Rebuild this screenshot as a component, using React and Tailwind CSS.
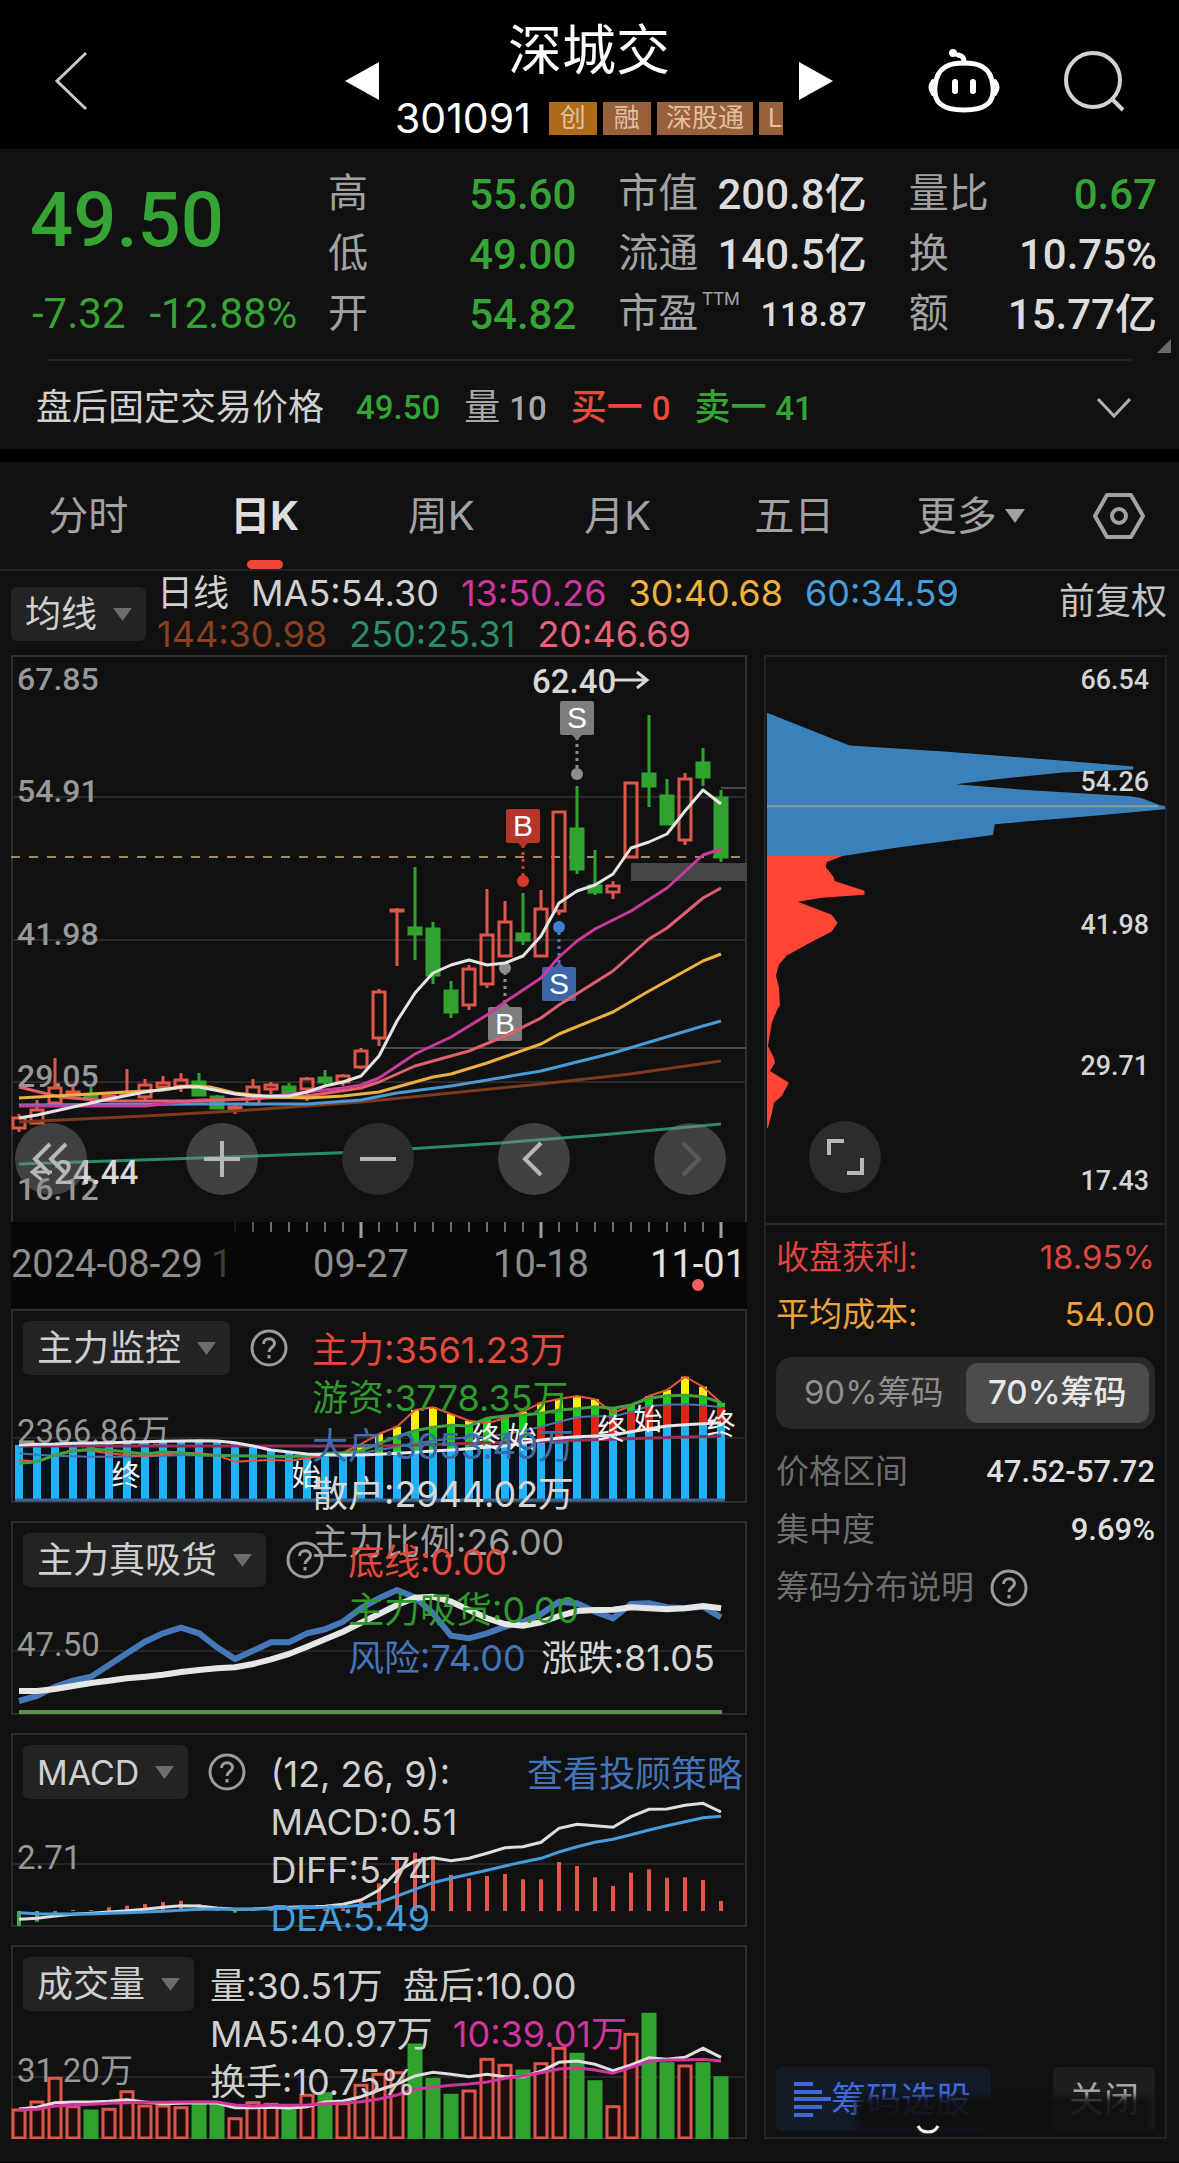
import React, { useState } from "react";

const STEP = 18;
const FIRST_X = 19;
const xAt = (i) => FIRST_X + i * STEP;
const series = (ys) => ys.map((y, i) => `${xAt(i)},${y}`).join(" ");
const fromTop = (base, ys) => ys.map((y) => Math.round((base + y / 3) * 10) / 10);

/* colour, high, body top, body bottom, low */
const CANDLES = [
  ["r", 1114, 1117, 1129, 1132], ["r", 1100, 1109, 1124, 1124], ["r", 1058, 1087, 1104, 1104],
  ["r", 1086, 1091, 1096, 1096], ["g", 1086, 1094, 1100, 1102], ["r", 1094, 1095, 1100, 1101],
  ["r", 1069, 1092, 1095, 1095], ["r", 1079, 1084, 1098, 1100], ["r", 1076, 1082, 1088, 1088],
  ["r", 1073, 1079, 1087, 1092], ["g", 1073, 1081, 1096, 1096], ["g", 1095, 1096, 1109, 1109],
  ["r", 1104, 1106, 1111, 1114], ["r", 1079, 1086, 1105, 1105], ["r", 1082, 1084, 1090, 1094],
  ["g", 1083, 1086, 1094, 1094], ["r", 1077, 1078, 1090, 1101], ["g", 1070, 1077, 1083, 1086],
  ["r", 1074, 1075, 1083, 1086], ["r", 1048, 1050, 1068, 1069], ["r", 989, 991, 1039, 1046],
  ["r", 908, 909, 911, 966], ["g", 867, 927, 935, 960], ["g", 922, 928, 976, 984],
  ["g", 981, 990, 1013, 1018], ["r", 965, 968, 1006, 1010], ["r", 889, 934, 985, 988],
  ["r", 901, 921, 957, 957], ["g", 893, 933, 941, 945], ["r", 890, 908, 957, 957],
  ["r", 811, 811, 912, 915], ["g", 786, 828, 870, 874], ["g", 850, 885, 893, 895],
  ["r", 881, 885, 893, 899], ["r", 782, 782, 858, 858], ["g", 715, 773, 787, 807],
  ["g", 779, 795, 825, 825], ["r", 773, 778, 841, 845], ["g", 748, 762, 778, 786],
  ["g", 790, 797, 858, 862],
];

const MA_LINES = [
  ["#2b8a68", "19,1164 200,1158 361,1152 500,1143 600,1135 721,1124"],
  ["#7d3a1c", "19,1122 145,1116 235,1111 361,1102 451,1093 541,1084 630,1074 721,1061"],
  ["#4a9ad8", "19,1105 200,1104 307,1104 361,1100 397,1093 451,1086 541,1071 613,1053 703,1026 721,1021"],
  ["#c93a9c", "19,1106 145,1106 200,1100 253,1099 307,1092 343,1088 361,1085 379,1078 415,1054 451,1037 487,1015 505,1002 541,978 559,957 577,941 595,929 631,911 667,888 703,855 721,849"],
  ["#e0606e", "19,1087 60,1097 110,1101 200,1101 307,1096 361,1088 379,1082 415,1066 451,1056 469,1051 505,1036 541,1018 559,1005 613,971 649,939 667,928 703,898 721,888"],
  ["#ecb040", "19,1098 109,1093 163,1090 190,1086 210,1087 235,1093 271,1097 307,1098 343,1096 379,1092 433,1077 451,1074 487,1063 541,1044 559,1034 613,1012 649,991 703,961 721,954"],
  ["#e4e4e4", "19,1118 37,1115 73,1107 109,1099 145,1092 181,1087 199,1087 235,1094 253,1096 289,1096 307,1092 325,1086 343,1082 361,1076 379,1056 397,1021 415,993 433,973 451,965 469,960 487,965 505,963 523,956 541,936 559,903 577,891 595,885 613,874 631,848 649,842 667,834 685,811 703,790 721,804"],
];

const MARKERS = [
  { t: "S", x: 577, box: 701, dot: 774, fill: "#7d7d7d", c: "#8e8e8e" },
  { t: "B", x: 523, box: 809, dot: 881, fill: "#b5352b", c: "#d8392c" },
  { t: "B", x: 505, box: 1007, dot: 968, fill: "#7d7d7d", c: "#8e8e8e" },
  { t: "S", x: 559, box: 967, dot: 927, fill: "#3a66a8", c: "#3f7fd0" },
];

const FLOW_TOP = fromTop(1160, [900, 905, 885, 870, 872, 880, 886, 888, 884, 878, 880, 886, 905, 902, 900, 902, 895, 885, 878, 852, 822, 800, 750, 742, 762, 782, 790, 775, 755, 728, 717, 708, 718, 758, 738, 708, 690, 650, 680, 728]);
const FLOW_GREEN = fromTop(1160, [910, 905, 885, 873, 868, 870, 876, 882, 876, 878, 885, 886, 887, 888, 889, 890, 886, 880, 878, 872, 850, 830, 812, 802, 796, 798, 775, 768, 765, 760, 750, 746, 740, 745, 735, 715, 707, 706, 710, 728]);
const FLOW_BLUE = fromTop(1160, [880, 884, 887, 889, 890, 890, 890, 888, 887, 886, 885, 886, 887, 888, 889, 890, 890, 888, 886, 880, 870, 860, 850, 842, 836, 832, 830, 822, 812, 800, 785, 772, 768, 770, 755, 738, 734, 733, 736, 742]);
const FLOW_WHITE = fromTop(1160, [855, 853, 852, 850, 849, 848, 847, 845, 844, 843, 842, 843, 848, 858, 870, 876, 882, 884, 885, 885, 883, 880, 877, 873, 870, 866, 862, 858, 850, 840, 834, 830, 828, 825, 815, 806, 798, 794, 791, 788]);

const RISK = fromTop(1510, [573, 558, 530, 512, 500, 465, 430, 395, 370, 353, 370, 412, 447, 422, 397, 397, 370, 358, 335, 295, 265, 240, 262, 310, 377, 385, 370, 350, 335, 312, 275, 280, 305, 325, 282, 280, 292, 295, 290, 322]);
const TREND = fromTop(1510, [543, 543, 537, 528, 519, 512, 505, 500, 494, 486, 480, 475, 472, 462, 448, 432, 410, 388, 365, 338, 312, 285, 263, 260, 275, 300, 325, 342, 347, 337, 318, 303, 300, 299, 292, 295, 298, 295, 288, 295]);

const MACD = fromTop(1510, [1248, 1235, 1215, 1200, 1200, 1192, 1187, 1182, 1176, 1172, 1183, 1198, 1208, 1200, 1200, 1200, 1200, 1198, 1195, 1175, 1120, 1050, 1028, 1045, 1095, 1105, 1098, 1092, 1108, 1108, 1056, 1068, 1102, 1128, 1088, 1078, 1103, 1102, 1110, 1173]);
const DIFF = fromTop(1510, [1228, 1225, 1218, 1213, 1210, 1206, 1202, 1198, 1192, 1187, 1188, 1194, 1198, 1197, 1194, 1192, 1190, 1189, 1183, 1170, 1140, 1085, 1053, 1043, 1052, 1045, 1030, 1013, 1010, 997, 955, 943, 947, 952, 920, 898, 897, 886, 880, 906]);
const DEA = fromTop(1510, [1208, 1211, 1212, 1212, 1212, 1210, 1208, 1206, 1204, 1201, 1198, 1197, 1198, 1197, 1196, 1195, 1193, 1192, 1190, 1186, 1178, 1158, 1138, 1118, 1105, 1093, 1081, 1068, 1056, 1045, 1026, 1010, 997, 988, 974, 960, 947, 935, 923, 919]);

const VOL_COLORS = "rrrrgrrrrrggrrrgrgrrrrgggrrrgrrggrrggrgg";
const VOLUME = fromTop(1930, [537, 513, 442, 527, 540, 535, 482, 525, 525, 530, 520, 520, 563, 515, 520, 540, 493, 488, 518, 463, 430, 425, 342, 445, 493, 480, 385, 403, 420, 398, 352, 370, 452, 527, 310, 250, 398, 405, 398, 440]);
const VOL_MA5 = fromTop(1930, [537, 532, 518, 516, 516, 514, 509, 516, 521, 520, 518, 519, 533, 533, 532, 535, 530, 516, 513, 500, 480, 462, 438, 427, 433, 440, 433, 440, 440, 424, 397, 393, 403, 422, 405, 383, 388, 382, 355, 382]);
const VOL_MA10 = fromTop(1930, [540, 538, 528, 525, 523, 520, 518, 517, 517, 516, 515, 516, 525, 528, 526, 526, 525, 521, 519, 515, 507, 495, 478, 472, 466, 462, 456, 445, 438, 428, 417, 413, 420, 430, 412, 393, 390, 390, 388, 393]);

const RED = "#e0564a";
const GREEN = "#30a22e";
const NUM = "font-['Roboto','Noto_Sans_CJK_SC',sans-serif]";
const TXT = "font-['Inter','Noto_Sans_CJK_SC',sans-serif]";

function Header() {
  return (
    <header className="flex items-center bg-black pt-5 pb-[7px] pl-[52px] pr-[53px]">
      <div className="flex flex-1">
        <button aria-label="返回">
          <svg width="38" height="60" viewBox="0 0 38 60" fill="none" stroke="#c8c8c8" strokeWidth="3">
            <path d="M34 2 5 30l29 28" />
          </svg>
        </button>
      </div>
      <div className="flex items-center gap-4">
        <button aria-label="上一只">
          <svg width="34" height="38" viewBox="0 0 34 38" fill="#fff"><path d="M34 0v38L0 19z" /></svg>
        </button>
        <div className="flex w-[388px] flex-col items-center gap-[10px] overflow-hidden">
          <h1 className="text-[54px] leading-[64px] text-white">深城交</h1>
          <div className="flex w-full items-center gap-[6px] overflow-hidden text-[26px] leading-[33px] whitespace-nowrap text-[#e0bfa0]">
            <span className={`${TXT} mr-3 shrink-0 text-[41px] leading-[48px] text-white`}>301091</span>
            <span className="shrink-0 bg-[#ae6a17] px-[11px]">创</span>
            <span className="shrink-0 bg-[#99603c] px-[11px]">融</span>
            <span className="shrink-0 bg-[#99603c] px-[9px]">深股通</span>
            <span className="shrink-0 bg-[#99603c] px-[9px]">L</span>
          </div>
        </div>
        <button aria-label="下一只">
          <svg width="34" height="38" viewBox="0 0 34 38" fill="#fff"><path d="M0 0v38l34-19z" /></svg>
        </button>
      </div>
      <div className="flex flex-1 items-center justify-end gap-[62px]">
        <button aria-label="智能助手">
          <svg width="72" height="66" viewBox="0 0 72 66" fill="none" stroke="#fff" strokeWidth="5" strokeLinecap="round">
            <path d="M36 15c-12 0-27 2-29 23-2 17 8 24 29 24s31-7 29-24C63 17 48 15 36 15z" />
            <path d="M5 33c-3 4-3 9 0 13M67 33c3 4 3 9 0 13" strokeWidth="4" />
            <path d="M36 15c0-4 0-7-6-8" />
            <circle cx="25" cy="5" r="4" fill="#fff" stroke="none" />
            <path d="M27 34v9M45 34v9" strokeWidth="6" />
          </svg>
        </button>
        <button aria-label="搜索">
          <svg width="64" height="62" viewBox="0 0 64 62" fill="none" stroke="#d2d2d2" strokeWidth="4">
            <circle cx="31" cy="30" r="27" />
            <path d="m50 49 11 11" />
          </svg>
        </button>
      </div>
    </header>
  );
}

function Stat({ label, value, sup, green, small }) {
  return (
    <div className="flex h-[60px] items-center justify-between">
      <dt className="flex text-[40px] text-[#a2a2a2]">
        {label}
        {sup && <sup className="top-0 ml-1 self-start text-[18px] leading-[30px]">{sup}</sup>}
      </dt>
      <dd className={`font-medium ${small ? "text-[34px]" : "text-[42px]"} ${green ? "text-[#35a435]" : "text-[#dcdcdc]"}`}>{value}</dd>
    </div>
  );
}

function Quote() {
  return (
    <section className="relative bg-[#111]">
      <div className="flex pt-[15px] pr-[22px] pb-[15px] pl-[30px]">
        <div className="w-[298px] shrink-0 font-medium text-[#35a435]">
          <p className="text-[76px] leading-[112px]">49.50</p>
          <p className="mt-[8px] flex gap-6 pl-[2px] text-[42px] leading-[60px] font-normal">
            <span>-7.32</span>
            <span>-12.88%</span>
          </p>
        </div>
        <div className="grid flex-1 grid-cols-3 gap-x-[42px]">
          <dl>
            <Stat label="高" value="55.60" green />
            <Stat label="低" value="49.00" green />
            <Stat label="开" value="54.82" green />
          </dl>
          <dl>
            <Stat label="市值" value="200.8亿" />
            <Stat label="流通" value="140.5亿" />
            <Stat label="市盈" sup="TTM" value="118.87" small />
          </dl>
          <dl>
            <Stat label="量比" value="0.67" green />
            <Stat label="换" value="10.75%" />
            <Stat label="额" value="15.77亿" />
          </dl>
        </div>
      </div>
      <svg className="absolute right-2 bottom-[96px]" width="14" height="14" viewBox="0 0 14 14" fill="#6a6a6a"><path d="M14 0v14H0z" /></svg>
      <div className="mx-12 border-t-2 border-[#242424]" />
      <div className="flex h-[88px] items-center pt-[5px] pr-12 pl-9 text-[36px] text-[#d0d0d0]">
        <span>盘后固定交易价格</span>
        <span className="ml-8 text-[33px] font-medium text-[#35a435]">49.50</span>
        <span className="ml-6 text-[#a8a8a8]">量 <span className="text-[33px] font-medium">10</span></span>
        <span className="ml-6 font-medium text-[#ee4a3c]">买一 <span className="text-[33px]">0</span></span>
        <span className="ml-6 font-medium text-[#35a435]">卖一 <span className="text-[33px]">41</span></span>
        <button className="ml-auto" aria-label="展开">
          <svg width="34" height="20" viewBox="0 0 34 20" fill="none" stroke="#b0b0b0" strokeWidth="3"><path d="m1 1 16 17L33 1" /></svg>
        </button>
      </div>
    </section>
  );
}

function Tabs() {
  const [tab, setTab] = useState("日K");
  return (
    <nav className="mt-[13px] grid h-[109px] grid-cols-[repeat(6,1fr)_120px] border-b-2 border-[#242424] bg-[#111] text-[40px] text-[#a2a2a2]">
      {["分时", "日K", "周K", "月K", "五日", "更多"].map((t) => (
        <button
          key={t}
          onClick={() => setTab(t)}
          className={`relative flex items-center justify-center gap-2 ${TXT} ${tab === t ? "font-bold text-[#dedede]" : ""}`}
        >
          {t}
          {t === "更多" && <svg width="20" height="14" viewBox="0 0 20 14" fill="#a2a2a2"><path d="M0 0h20L10 14z" /></svg>}
          {tab === t && <span className="absolute bottom-0 h-[9px] w-9 rounded-full bg-[#ee4637]" />}
        </button>
      ))}
      <button className="flex items-center justify-center" aria-label="设置">
        <svg width="54" height="48" viewBox="0 0 54 48" fill="none" stroke="#a2a2a2" strokeWidth="4" strokeLinejoin="round">
          <path d="M15 3h24l12 21-12 21H15L3 24z" />
          <circle cx="27" cy="24" r="7" />
        </svg>
      </button>
    </nav>
  );
}

function Chip({ children }) {
  return (
    <button className="pointer-events-auto flex h-[54px] shrink-0 items-center gap-4 rounded-md bg-[#232323] px-[14px] text-[36px] whitespace-nowrap text-[#cfcfcf]">
      {children}
      <svg width="19" height="13" viewBox="0 0 19 13" fill="#6c6c6c"><path d="M0 0h19l-9.500 13z" /></svg>
    </button>
  );
}

function Help({ className = "" }) {
  return (
    <button aria-label="说明" className={`pointer-events-auto shrink-0 ${className}`}>
      <svg width="38" height="38" viewBox="0 0 38 38" fill="none" stroke="#9c9c9c" strokeWidth="3">
        <circle cx="19" cy="19" r="17" />
        <path d="M13.500 15c0-7 11-7 11-.5 0 4-5.500 4-5.500 8.500" />
        <path d="M19 26v3.500" />
      </svg>
    </button>
  );
}

function MaLegend() {
  return (
    <div className={`flex items-start gap-[11px] pr-3 pl-[11px] ${TXT}`}>
      <div className="mt-4"><Chip>均线</Chip></div>
      <div className="flex-1 pt-[2px] text-[36px] leading-[41px]">
        <p className="flex h-[41px] gap-[22px] whitespace-nowrap text-[#d0d0d0]">
          <span>日线</span><span>MA5:54.30</span>
          <span className="text-[#d0359e]">13:50.26</span>
          <span className="text-[#f0b13c]">30:40.68</span>
          <span className="text-[#459ddd]">60:34.59</span>
        </p>
        <p className="flex h-[41px] gap-[22px] whitespace-nowrap text-[#8a3f1e]">
          <span>144:30.98</span>
          <span className="text-[#2a8c69]">250:25.31</span>
          <span className="text-[#e8637a]">20:46.69</span>
        </p>
      </div>
      <button className="mt-[10px] text-[36px] leading-[40px] whitespace-nowrap text-[#c4c4c4]">前复权</button>
    </div>
  );
}

function RoundButton({ label, path, dim, off, className = "" }) {
  return (
    <button aria-label={label} className={`flex size-[72px] shrink-0 items-center justify-center rounded-full ${dim ? "bg-[#2c2c2c]" : "bg-[#8a8a8a]/40"} ${className}`}>
      <svg width="40" height="40" viewBox="0 0 40 40" fill="none" stroke={off ? "#5a5a5a" : "#b8b8b8"} strokeWidth="4"><path d={path} /></svg>
    </button>
  );
}

function Candle({ d, i }) {
  const [k, hi, top, bot, lo] = d;
  const x = xAt(i);
  const c = k === "r" ? RED : GREEN;
  return (
    <g stroke={c} strokeWidth="3">
      <path d={`M${x} ${hi}V${top}M${x} ${bot}V${lo}`} />
      <rect x={x - 6} y={top + 1} width="12" height={Math.max(bot - top - 2, 1)} fill={k === "r" ? "none" : c} />
    </g>
  );
}

function MainChart() {
  return (
    <div className="relative">
      <svg viewBox="11 655 736 654" className="block w-full" fontFamily="Roboto, 'Noto Sans CJK SC', sans-serif">
        <defs>
          <linearGradient id="fade" x1="0" x2="1">
            <stop offset="0" stopColor="#070707" /><stop offset="0.500" stopColor="#070707" /><stop offset="1" stopColor="#070707" stopOpacity="0" />
          </linearGradient>
        </defs>
        <rect x="11" y="1222" width="736" height="86" fill="#070707" />
        <path d="M12 1222V656H746V1222" fill="none" stroke="#303030" strokeWidth="2" />
        <path d="M12 797H746M12 940H746M12 1082H746" stroke="#2b2b2b" strokeWidth="2" />
        <path d="M385 1048H746M721 788H746" stroke="#4a4a4a" strokeWidth="2" />
        <path d="M11 857H741" stroke="#a38a62" strokeWidth="2" strokeDasharray="9 9" />
        <g fill="#989898" fontSize="32" fontWeight="500">
          <text x="17" y="690">67.85</text>
          <text x="17" y="802">54.91</text>
          <text x="17" y="945">41.98</text>
          <text x="17" y="1087">29.05</text>
          <text x="17" y="1200">16.12</text>
        </g>
        <rect x="631" y="863" width="116" height="18" fill="#454545" />
        {CANDLES.map((d, i) => <Candle key={i} d={d} i={i} />)}
        {MARKERS.map((m) => {
          const up = m.box < m.dot;
          return (
            <g key={m.box}>
              <path d={`M${m.x} ${up ? m.box + 36 : m.box - 4}V${m.dot}`} stroke={m.c} strokeWidth="3" strokeDasharray="3 4" />
              <circle cx={m.x} cy={m.dot} r="6" fill={m.c} />
              <rect x={m.x - 17} y={m.box} width="34" height="34" rx="2" fill={m.fill} />
              <path d={up ? `M${m.x - 5} ${m.box + 34}h10l-5 5z` : `M${m.x - 5} ${m.box}h10l-5 -5z`} fill={m.fill} />
              <text x={m.x} y={m.box + 27} textAnchor="middle" fontFamily="'Liberation Sans', sans-serif" fontSize="30" fill="#fff">{m.t}</text>
            </g>
          );
        })}
        {MA_LINES.map(([c, p]) => <polyline key={c} points={p} fill="none" stroke={c} strokeWidth="3" strokeLinejoin="round" />)}
        <g fill="#d8d8d8" fontSize="33" fontWeight="500">
          <text x="532" y="693">62.40</text>
          <text x="54" y="1184">24.44</text>
        </g>
        <path d="M614 680H647M637 672l10 8-10 8M52 1172H32m10-8-10 8 10 8" fill="none" stroke="#d8d8d8" strokeWidth="3" />
        <g stroke="#6f6f6f" strokeWidth="2">
          {Array.from({ length: 29 }, (_, i) => <path key={i} d={`M${217 + i * STEP} 1222v10`} />)}
        </g>
        <path d="M361 1222v16M541 1222v16M721 1222v16" stroke="#a0a0a0" strokeWidth="3" />
        <g fill="#8e8e8e" fontSize="38">
          <text x="11" y="1277">2024-08-29</text>
          <text x="211" y="1277" fill="#3c3c3c">1</text>
          <text x="361" y="1277" textAnchor="middle">09-27</text>
          <text x="541" y="1277" textAnchor="middle">10-18</text>
          <text x="746" y="1277" textAnchor="end" fill="#e2e2e2">11-01</text>
        </g>
        <rect x="200" y="1222" width="60" height="18" fill="url(#fade)" />
        <circle cx="698" cy="1285" r="6" fill="#f0605c" />
      </svg>
      <div className="absolute inset-x-0 bottom-[114px] flex gap-[84px] pl-1">
        <RoundButton label="最早" path="M19 5 4 20l15 15M35 5 20 20l15 15" className="mr-[15px]" />
        <RoundButton label="放大" path="M20 2v36M2 20h36" />
        <RoundButton label="缩小" path="M2 20h36" dim />
        <RoundButton label="向左" path="M27 4 11 20l16 16" />
        <RoundButton label="向右" path="M13 4l16 16-16 16" off />
      </div>
    </div>
  );
}

function Panel({ top, grid, label, title, help = true, legend, action, children }) {
  return (
    <section className="relative">
      <svg viewBox={`11 ${top} 736 194`} className="block w-full" fontFamily="Roboto, 'Noto Sans CJK SC', sans-serif">
        <rect x="12" y={top + 1} width="734" height="192" fill="none" stroke="#2c2c2c" strokeWidth="2" />
        <path d={`M12 ${grid}H746`} stroke="#262626" strokeWidth="2" />
        <text x="17" y={grid + 5} fontSize="33" fill="#989898">{label}</text>
        {children}
      </svg>
      <div className={`pointer-events-none absolute inset-x-0 top-0 flex items-start pt-3 pl-3 ${TXT}`}>
        <Chip>{title}</Chip>
        {help && <Help className="mt-2 ml-5" />}
        <div className={`mt-[5px] text-[36px] leading-[48px] whitespace-nowrap ${help ? "ml-6" : "ml-4"}`}>{legend}</div>
        {action}
      </div>
    </section>
  );
}

function FlowPanel() {
  return (
    <Panel
      top={1309} grid={1438} label="2366.86万" title="主力监控"
      legend={
        <>
          <p className="text-[#e5493b]">主力:3561.23万</p>
          <p className="text-[#2e9a2e]">游资:3778.35万</p>
          <p className="text-[#3f6cab]">大户:3653.49万</p>
          <p className="text-[#d6d6d6]">散户:2944.02万</p>
          <p className="text-[#a0a0a0]">主力比例:26.00</p>
        </>
      }
    >
      <rect x="15" y="1450" width="710" height="51" fill="#08121c" />
      {FLOW_WHITE.map((w, i) => {
        const x = xAt(i) - 4;
        const b = Math.min(FLOW_BLUE[i], w);
        const g = FLOW_GREEN[i];
        const t = FLOW_TOP[i];
        return (
          <g key={i}>
            <rect x={x} y={w} width="8" height={1500 - w} fill="#1fb2f8" />
            {i > 18 && (
              <>
                {t < g && <rect x={x} y={t} width="8" height={g - t} fill="#f8ee10" />}
                <rect x={x} y={g} width="8" height={Math.max(b - g, 1)} fill="#18cf1c" />
                <rect x={x} y={b} width="8" height={w - b} fill={i > 28 ? "#e02414" : "#18cf1c"} />
              </>
            )}
          </g>
        );
      })}
      <path d="M15 1500H725" stroke="#3d6796" strokeWidth="3" />
      <g fill="none" strokeWidth="3">
        <path d="M19 1446H379L721 1436" stroke="#94305a" />
        <polyline points={series(FLOW_BLUE)} stroke="#4a73a8" strokeWidth="2" />
        <polyline points={series(FLOW_TOP)} stroke="#e0563c" strokeWidth="2" />
        <polyline points={series(FLOW_GREEN)} stroke="#43a040" />
        <polyline points={series(FLOW_WHITE)} stroke="#e4e4ec" />
      </g>
      <g fill="#f2f2f2" fontSize="29" textAnchor="middle">
        <text x="126" y="1486">终</text><text x="306" y="1486">始</text>
        <text x="486" y="1448">终</text><text x="522" y="1448">始</text>
        <text x="612" y="1440">终</text><text x="648" y="1430">始</text>
        <text x="721" y="1435">终</text>
      </g>
    </Panel>
  );
}

function RiskPanel() {
  return (
    <Panel
      top={1521} grid={1651} label="47.50" title="主力真吸货"
      legend={
        <>
          <p className="text-[#e5493b]">底线:0.00</p>
          <p className="text-[#2e9a2e]">主力吸货:0.00</p>
          <p className="flex gap-4 text-[#4474b8]"><span>风险:74.00</span><span className="text-[#d6d6d6]">涨跌:81.05</span></p>
        </>
      }
    >
      <path d="M19 1712H722" stroke="#59934a" strokeWidth="4" />
      <polyline points={series(RISK)} fill="none" stroke="#4478b8" strokeWidth="6" />
      <polyline points={series(TREND)} fill="none" stroke="#e6e6e6" strokeWidth="6" />
    </Panel>
  );
}

function MacdPanel() {
  return (
    <Panel
      top={1733} grid={1864} label="2.71" title={<span className="text-[34px]">MACD</span>}
      legend={
        <div className="text-[#cfcfcf]">
          <p>(12, 26, 9):</p>
          <p>MACD:0.51</p>
          <p>DIFF:5.74</p>
          <p className="text-[#459ddd]">DEA:5.49</p>
        </div>
      }
      action={<a href="#strategy" className="pointer-events-auto mt-[5px] mr-1 ml-auto text-[36px] leading-[48px] whitespace-nowrap text-[#4474b8]">查看投顾策略</a>}
    >
      {MACD.map((y, i) => (
        <path key={i} d={`M${xAt(i)} 1911V${y}`} stroke={y > 1911 ? "#3fae3c" : RED} strokeWidth="4" />
      ))}
      <polyline points={series(DIFF)} fill="none" stroke="#dedede" strokeWidth="3" />
      <polyline points={series(DEA)} fill="none" stroke="#459ddd" strokeWidth="3" />
    </Panel>
  );
}

function VolumePanel() {
  return (
    <Panel
      top={1945} grid={2077} label="31.20万" title="成交量" help={false}
      legend={
        <div className="text-[#cfcfcf]">
          <p className="flex gap-5"><span>量:30.51万</span><span>盘后:10.00</span></p>
          <p className="flex gap-5"><span>MA5:40.97万</span><span className="text-[#d0359e]">10:39.01万</span></p>
          <p>换手:10.75%</p>
        </div>
      }
    >
      {VOLUME.map((y, i) => {
        const g = VOL_COLORS[i] === "g";
        return (
          <rect key={i} x={xAt(i) - 6} y={y + 1} width="12" height={2137 - y} fill={g ? GREEN : "#1c0f0d"} stroke={g ? GREEN : RED} strokeWidth="3" />
        );
      })}
      <polyline points={series(VOL_MA5)} fill="none" stroke="#dedede" strokeWidth="3" />
      <polyline points={series(VOL_MA10)} fill="none" stroke="#d0359e" strokeWidth="3" />
    </Panel>
  );
}

function ChipChart() {
  return (
    <div className="relative">
      <svg viewBox="764 655 401 569" className="block w-full" fontFamily="Roboto, sans-serif">
        <path d="M765 711 848 744 943 750 1060 759 1133 765V768L1062 771 994 778 955 783 1030 789 1130 795 1142 797 1160 804 1166 805V808L1088 815 994 823 992 834 900 846 880 849 841 855H765z" fill="#3a80ba" />
        <path d="M765 855H841L825 861 824 866 832 876 833 880 863 890V894L820 897 796 901 830 914 836 922 830 931 805 944 785 955 777 964 774 975 777 987 778 1005 775 1010 770 1022 767 1040 766 1046 772 1058 773 1063 768 1071 787 1083 780 1096 772 1103 770 1113 766 1128H765z" fill="#ff4534" />
        <path d="M765 805H1158" stroke="#8f9f98" strokeWidth="2" />
        <g fill="#d4d4d4" fontSize="27" fontWeight="500" textAnchor="end">
          <text x="1149" y="687">66.54</text>
          <text x="1149" y="790">54.26</text>
          <text x="1149" y="933">41.98</text>
          <text x="1149" y="1075">29.71</text>
          <text x="1149" y="1191">17.43</text>
        </g>
      </svg>
      <div className="absolute bottom-[30px] left-[43px]">
        <RoundButton label="全屏" path="M4 18V4H19M37 21V36H22" dim />
      </div>
    </div>
  );
}

function ChipPanel() {
  const [range, setRange] = useState("70%");
  return (
    <aside className="flex flex-col border-2 border-[#242424]">
      <ChipChart />
      <div className={`flex flex-1 flex-col border-t-2 border-[#2c2c2c] px-[10px] pt-1 pb-[6px] text-[33px] ${TXT}`}>
        <p className="flex h-[57px] items-center justify-between text-[#dd4640]"><span>收盘获利:</span><span>18.95%</span></p>
        <p className="flex h-[57px] items-center justify-between text-[#eba13c]"><span>平均成本:</span><span>54.00</span></p>
        <div className="mt-[14px] grid h-[72px] grid-cols-2 rounded-2xl bg-[#292929] p-[6px]">
          {["90%", "70%"].map((r) => (
            <button key={r} onClick={() => setRange(r)} className={`rounded-xl ${range === r ? "bg-[#4c4c4c] font-medium text-[#e8e8e8]" : "text-[#8f8f8f]"}`}>{r}筹码</button>
          ))}
        </div>
        <p className="mt-[14px] flex h-[58px] items-center justify-between text-[#6e6e6e]"><span>价格区间</span><span className={`${NUM} text-[31px] font-medium text-[#dedede]`}>47.52-57.72</span></p>
        <p className="flex h-[58px] items-center justify-between text-[#6e6e6e]"><span>集中度</span><span className={`${NUM} text-[31px] font-medium text-[#dedede]`}>9.69%</span></p>
        <p className="flex h-[58px] items-center gap-4 text-[#6e6e6e]"><span>筹码分布说明</span><Help /></p>
        <div className="relative mt-auto flex justify-between text-[35px] leading-[64px]">
          <button className="flex items-center rounded-md bg-[#131b28] pr-5 pl-[18px] text-[#3f68dc]">
            <svg width="37" height="35" viewBox="0 0 37 35" fill="#3f68dc">
              <path d="M0 0h19v4H0zM0 8h28v4H0zM0 15h37v4H0zM0 23h28v4H0zM0 31h19v4H0z" />
            </svg>
            筹码选股
          </button>
          <button className="rounded-md bg-[#1e1e1e] px-4 text-[#a8a8a8]">关闭</button>
          <span className="pointer-events-none absolute right-1 bottom-0 left-20 h-[34px] bg-[#101010]/90 blur-[3px]" />
          <svg className="absolute bottom-[-4px] left-[140px]" width="24" height="10" viewBox="0 0 24 10" fill="none" stroke="#f2f2f2" strokeWidth="3"><path d="M2 1c4 8 16 8 20 0" /></svg>
        </div>
      </div>
    </aside>
  );
}

export default function App() {
  return (
    <div className={`min-h-screen bg-black ${NUM}`}>
      <Header />
      <Quote />
      <Tabs />
      <main className="bg-[#111] pb-[23px]">
        <MaLegend />
        <div className="grid grid-cols-[736fr_403fr] gap-x-[17px] pr-3 pl-[11px]">
          <div className="flex flex-col gap-[18px]">
            <div className="-mb-[18px]"><MainChart /></div>
            <FlowPanel />
            <RiskPanel />
            <MacdPanel />
            <VolumePanel />
          </div>
          <ChipPanel />
        </div>
      </main>
    </div>
  );
}
